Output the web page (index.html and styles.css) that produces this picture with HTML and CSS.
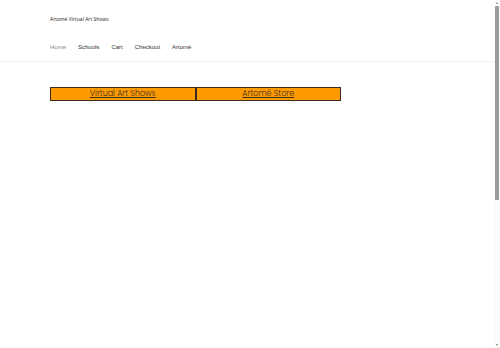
FILE: index.html
```html
<!DOCTYPE html>
<html lang="en">
<head>
<meta charset="utf-8">
<title>Artomé Virtual Art Shows</title>
<link rel="stylesheet" href="styles.css">
</head>
<body>
<div class="page">
  <header class="site-header">
    <div class="inner">
      <div class="site-title">Artomé Virtual Art Shows</div>
      <nav class="nav">
        <a class="nav-item current" href="#">Home</a>
        <a class="nav-item" href="#">Schools</a>
        <a class="nav-item" href="#">Cart</a>
        <a class="nav-item" href="#">Checkout</a>
        <a class="nav-item" href="#">Artomé</a>
      </nav>
    </div>
  </header>
  <main class="content">
    <div class="buttons">
      <a class="btn" href="#">Virtual Art Shows</a>
      <a class="btn" href="#">Artomé Store</a>
    </div>
  </main>
</div>
<div class="scrollbar">
  <span class="arrow up"></span>
  <span class="thumb"></span>
  <span class="arrow down"></span>
</div>
</body>
</html>
```
FILE: styles.css
```css
html, body {
  margin: 0;
  padding: 0;
  background: #fff;
  overflow: hidden;
}
.page {
  height: 348px;
  padding-right: 6px;
  font-family: "Open Sans", "Noto Sans", sans-serif;
  color: #333;
}
.site-header {
  border-bottom: 1px solid #f0f0f0;
}
.inner {
  padding: 15px 0 0 50px;
  display: flex;
  flex-direction: column;
}
.site-title {
  font-size: 5px;
  line-height: 8px;
  color: #222;
}
.nav {
  display: flex;
  gap: 12px;
  margin-top: 19px;
  height: 19px;
}
.nav-item {
  font-family: "Liberation Sans", Arial, sans-serif;
  font-size: 6px;
  line-height: 10px;
  color: #333;
  text-decoration: none;
}
.nav-item.current {
  color: #888;
}
.content {
  padding: 25px 0 0 50px;
}
.buttons {
  display: flex;
}
.btn {
  box-sizing: border-box;
  width: 145.5px;
  height: 14px;
  background: #fd9a00;
  border: 1.5px solid #3b2a1c;
  color: #3f3020;
  font-family: "Poppins", "Lato", "Roboto", sans-serif;
  font-weight: 300;
  font-size: 8px;
  line-height: 11px;
  text-align: center;
  text-decoration: underline;
  text-underline-offset: 1px;
}
.scrollbar {
  position: fixed;
  top: 0;
  right: 0;
  width: 6px;
  height: 348px;
  background: #fbfbfb;
  display: flex;
  flex-direction: column;
  align-items: center;
}
.arrow {
  width: 0;
  height: 0;
  border-left: 1.5px solid transparent;
  border-right: 1.5px solid transparent;
}
.arrow.up {
  margin-top: 2px;
  border-bottom: 2px solid #777;
}
.arrow.down {
  margin-top: auto;
  margin-bottom: 2px;
  border-top: 2px solid #777;
}
.thumb {
  margin-top: 2px;
  width: 4px;
  height: 194px;
  background: #9a9a9a;
  border-radius: 1px;
}
```
